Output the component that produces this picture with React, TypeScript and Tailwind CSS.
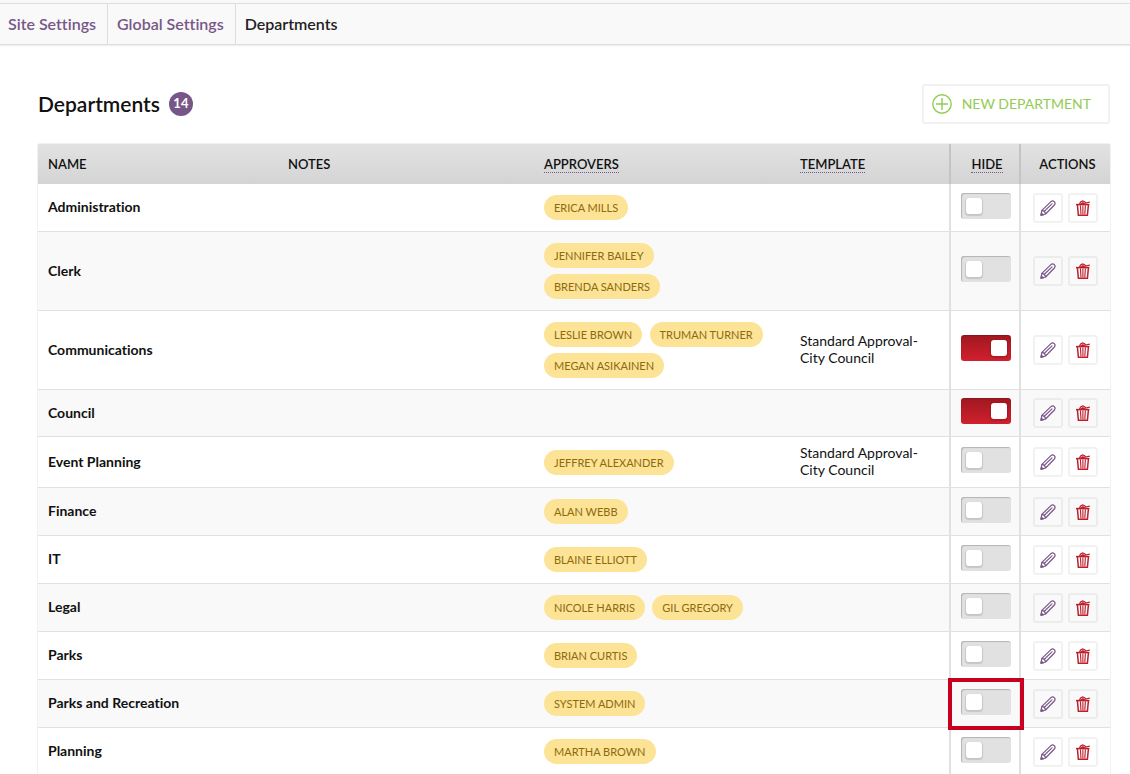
import clsx from "clsx";

type Department = {
  name: string;
  approvers: string[];
  template?: string;
  hidden?: boolean;
  highlighted?: boolean;
};

const TOTAL = 14;

const departments: Department[] = [
  { name: "Administration", approvers: ["Erica Mills"] },
  { name: "Clerk", approvers: ["Jennifer Bailey", "Brenda Sanders"] },
  {
    name: "Communications",
    approvers: ["Leslie Brown", "Truman Turner", "Megan Asikainen"],
    template: "Standard Approval-City Council",
    hidden: true,
  },
  { name: "Council", approvers: [], hidden: true },
  { name: "Event Planning", approvers: ["Jeffrey Alexander"], template: "Standard Approval-City Council" },
  { name: "Finance", approvers: ["Alan Webb"] },
  { name: "IT", approvers: ["Blaine Elliott"] },
  { name: "Legal", approvers: ["Nicole Harris", "Gil Gregory"] },
  { name: "Parks", approvers: ["Brian Curtis"] },
  { name: "Parks and Recreation", approvers: ["System Admin"], highlighted: true },
  { name: "Planning", approvers: ["Martha Brown"] },
];

const PlusIcon = () => (
  <svg viewBox="0 0 20 20" className="size-5" fill="none" stroke="currentColor" aria-hidden="true">
    <circle cx="10" cy="10" r="9.2" strokeWidth="1.4" />
    <path d="M10 4v12M4 10h12" strokeWidth="1.4" />
  </svg>
);

const PencilIcon = () => (
  <svg viewBox="0 0 16 16" className="size-4" fill="none" stroke="currentColor" strokeLinejoin="round" strokeLinecap="round" aria-hidden="true">
    <path d="M.9 15.2 1.9 10.4 10.9 1.6Q12.6.2 14.3 1.6 15.8 3.3 14.4 5L5.6 14Z" strokeWidth="1.2" />
    <path d="M2 10.4Q5 10.8 5.6 13.8M4.6 11 12 3.8" strokeWidth="1.1" />
    <path d="M.9 15.2 1.4 12.8 3.4 14.7Z" fill="currentColor" strokeWidth=".8" />
  </svg>
);

const TrashIcon = () => (
  <svg viewBox="0 0 16 16" className="size-4" fill="none" stroke="currentColor" aria-hidden="true">
    <path d="M1 4.6H14.4" strokeWidth="1.5" />
    <path d="M4.4 4.2 5.6 1.9 7.6 1 9.6 1.8 10.6 3 14.8 2.2" strokeWidth="1.2" />
    <path d="M5.4 4 7.8 2.2 10.2 4Z" fill="currentColor" strokeWidth=".6" />
    <path d="M2.4 5 3.4 15.3H12.4L13.4 5" strokeWidth="1.5" />
    <path d="M5.4 5.4 6 14.4M7.9 5.4V14.4M10.4 5.4 9.8 14.4" strokeWidth="1.1" />
  </svg>
);

const Approver = ({ name }: { name: string }) => (
  <>
    <span className="my-[3px] mr-1 inline-block h-[25px] rounded-full bg-[#fce396] px-[10px] align-top text-[11px] leading-[26px] whitespace-nowrap text-[#8c6a0e] uppercase">
      {name}
    </span>{" "}
  </>
);

const HideToggle = ({ name, checked }: { name: string; checked?: boolean }) => (
  <input
    type="checkbox"
    defaultChecked={checked}
    aria-label={`Hide ${name}`}
    className="mb-1 block h-[26px] w-[50px] cursor-pointer appearance-none rounded-[3px] bg-[#e1e1e1] p-[5px] shadow-[inset_1px_1px_1px_#b4b4b4] before:block before:size-4 before:rounded-[3px] before:bg-white before:shadow-[0_1px_1px_1px_rgba(0,0,0,0.12)] checked:bg-linear-to-b checked:from-[#a01820] checked:to-[#d1202d] checked:shadow-[inset_0_1px_1px_#8c151c] checked:before:ml-[25px]"
  />
);

const actionButton = "flex size-[30px] cursor-pointer items-center justify-center rounded-[3px] border-2 border-black/5";

const DepartmentRow = ({ department, striped }: { department: Department; striped: boolean }) => {
  const cell = "border-b border-b-[#e1e1e1]";
  const textCell = "px-[10px] pt-[7px] pb-[9px] text-[14px] leading-[17px]";
  return (
    <tr className={striped ? "bg-[#f9f9f9]" : "bg-white"}>
      <th scope="row" className={clsx(cell, textCell, "text-left font-bold")}>
        {department.name}
      </th>
      <td className={clsx(cell, textCell)}></td>
      <td className={clsx(cell, "px-[10px] py-2 text-[13px]")}>
        {department.approvers.map((name) => (
          <Approver key={name} name={name} />
        ))}
      </td>
      <td className={clsx(cell, textCell)}>{department.template}</td>
      <td className={clsx(cell, "relative border-l-2 border-l-[#e1e1e1] py-2 pl-[10px]")}>
        <HideToggle name={department.name} checked={department.hidden} />
        {department.highlighted && (
          <div className="pointer-events-none absolute -top-[2px] -left-[3px] z-10 h-[52px] w-[76px] border-4 border-[#c8001f]" />
        )}
      </td>
      <td className={clsx(cell, "border-l-2 border-l-[#e1e1e1] py-2 pl-3")}>
        <div className="flex gap-[5px]">
          <button type="button" aria-label={`Edit ${department.name}`} className={clsx(actionButton, "text-[#775788]")}>
            <PencilIcon />
          </button>
          <button type="button" aria-label={`Delete ${department.name}`} className={clsx(actionButton, "text-[#be1e2d]")}>
            <TrashIcon />
          </button>
        </div>
      </td>
    </tr>
  );
};

const App = () => {
  const heading = "px-[10px] font-semibold";
  const hint = "border-b border-dotted border-[#775788] no-underline";

  return (
    <div className="h-screen overflow-hidden bg-white font-['Lato',sans-serif] text-[#111] [font-variant-ligatures:none]">
      <div className="bg-[#f9f9f9] pt-[3px]">
        <nav aria-label="Breadcrumb" className="border-y border-[#dedede] shadow-[0_1px_1px_#eeeeee]">
          <ol className="flex h-10 text-[16px] leading-10 font-semibold">
            <li className="border-r border-[#dedede] pr-[11px] pl-2">
              <a href="#site" className="text-[#775788]">Site Settings</a>
            </li>
            <li className="border-r border-[#dedede] pr-[11px] pl-[9px]">
              <a href="#global" className="text-[#775788]">Global Settings</a>
            </li>
            <li className="px-[9px] text-[#222]" aria-current="page">Departments</li>
          </ol>
        </nav>
      </div>

      <main className="pt-[39px] pr-[19px] pl-[37px]">
        <div className="mb-[19px] flex items-center justify-between pr-px pl-px">
          <div className="flex items-center gap-[9px]">
            <h1 className="text-[21px] font-semibold">Departments</h1>
            <span className="flex size-6 items-center justify-center rounded-full bg-[#775788] text-[13px] font-bold text-white">
              {TOTAL}
            </span>
          </div>
          <button
            type="button"
            className="flex h-10 cursor-pointer items-center gap-[10px] rounded-[3px] border-2 border-[#f1f1f1] pr-[17px] pl-2 text-[14px] leading-[18px] text-[#92cc53] uppercase"
          >
            <PlusIcon />
            New Department
          </button>
        </div>

        <div className="rounded-t-[3px] border border-[#f1f1f1]">
          <table className="w-full table-fixed border-separate border-spacing-0">
            <colgroup>
              <col className="w-[240px]" />
              <col />
              <col />
              <col className="w-[159px]" />
              <col className="w-[70px]" />
              <col className="w-[91px]" />
            </colgroup>
            <thead className="bg-linear-to-b from-[#e2e2e2] to-[#d4d4d4] text-left text-[13px] leading-4 uppercase">
              <tr className="h-10">
                <th scope="col" className={heading}>Name</th>
                <th scope="col" className={heading}>Notes</th>
                <th scope="col" className={heading}><abbr title="People who approve items" className={hint}>Approvers</abbr></th>
                <th scope="col" className={heading}><abbr title="Default approval template" className={hint}>Template</abbr></th>
                <th scope="col" className="border-l-2 border-[#c4c4c4] pl-1 text-center font-semibold">
                  <abbr title="Hide from lists" className={hint}>Hide</abbr>
                </th>
                <th scope="col" className="border-l-2 border-[#c4c4c4] pl-1 text-center font-semibold">Actions</th>
              </tr>
            </thead>
            <tbody>
              {departments.map((department, i) => (
                <DepartmentRow key={department.name} department={department} striped={i % 2 === 1} />
              ))}
            </tbody>
          </table>
        </div>
      </main>
    </div>
  );
};

export default App;
